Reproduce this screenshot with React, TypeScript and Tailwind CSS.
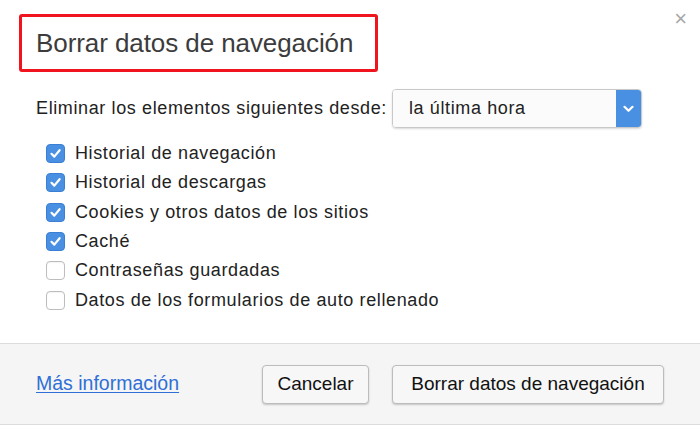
import React from "react";

const items: { label: string; checked: boolean }[] = [
  { label: "Historial de navegación", checked: true },
  { label: "Historial de descargas", checked: true },
  { label: "Cookies y otros datos de los sitios", checked: true },
  { label: "Caché", checked: true },
  { label: "Contraseñas guardadas", checked: false },
  { label: "Datos de los formularios de auto rellenado", checked: false },
];

function Box({ checked }: { checked: boolean }) {
  if (checked) {
    return (
      <span className="flex h-[19px] w-[19px] shrink-0 items-center justify-center rounded-[4px] border border-[#3a7fd3] bg-[#4a90e2]">
        <svg width="13" height="13" viewBox="0 0 13 13">
          <path d="M2.5 6.8 L5.3 9.6 L10.6 3.2" fill="none" stroke="white" strokeWidth="2.2" strokeLinecap="round" strokeLinejoin="round" />
        </svg>
      </span>
    );
  }
  return <span className="block h-[19px] w-[19px] shrink-0 rounded-[4px] border border-[#bdbdbd] bg-white shadow-[inset_0_1px_1px_rgba(0,0,0,0.05)]" />;
}

export default function App() {
  return (
    <div className="flex h-[432px] w-[700px] flex-col bg-white text-[#333]" style={{ fontFamily: '"Liberation Sans", Arial, sans-serif' }}>
      <div className="flex flex-1 flex-col">
        <div className="flex items-start justify-between">
          <div className="ml-[19px] mt-[14px] flex h-[58px] w-[359px] items-center rounded-[3px] border-[3px] border-[#f0141e] pl-[14px]">
            <span className="text-[26px] leading-none tracking-[-0.08px] text-[#3c3c3c]">Borrar datos de navegación</span>
          </div>
          <span className="mr-[13px] mt-[8px] text-[22px] leading-none text-[#a8a8a8]">×</span>
        </div>
        <div className="ml-[36px] mt-[17px] flex items-center gap-[5px]">
          <span className="text-[18px] tracking-[0.62px] text-[#222]">Eliminar los elementos siguientes desde:</span>
          <div className="flex h-[39px] w-[250px] overflow-hidden rounded-[4px] border border-[#c8c8c8] shadow-[0_1px_2px_rgba(0,0,0,0.15)]">
            <div className="flex flex-1 items-center bg-[#fbfbfb] pl-[16px] text-[18px] tracking-[0.62px] text-[#222]">la última hora</div>
            <div className="flex w-[25px] items-center justify-center bg-[#4a90e2]">
              <svg width="11" height="8" viewBox="0 0 11 8">
                <path d="M1.5 1.8 L5.5 5.8 L9.5 1.8" fill="none" stroke="white" strokeWidth="2.2" strokeLinecap="round" strokeLinejoin="round" />
              </svg>
            </div>
          </div>
        </div>
        <div className="ml-[46px] mt-[11px] flex flex-col">
          {items.map((it) => (
            <div key={it.label} className="flex h-[29.3px] items-center gap-[10px]">
              <Box checked={it.checked} />
              <span className="text-[18px] tracking-[0.62px] text-[#222]">{it.label}</span>
            </div>
          ))}
        </div>
      </div>
      <div className="flex h-[82px] items-center border-y border-[#dcdcdc] bg-[#f5f5f5] pl-[36px] pr-[36px]">
        <a className="text-[19.5px] text-[#2f6fd6] underline underline-offset-2">Más información</a>
        <div className="ml-auto flex gap-[23px]">
          <button className="h-[39px] w-[107px] rounded-[4px] border border-[#bcbcbc] bg-[#f7f7f7] text-[19px] text-[#111] shadow-[0_1px_2px_rgba(0,0,0,0.2)]">Cancelar</button>
          <button className="h-[39px] w-[272px] rounded-[4px] border border-[#bcbcbc] bg-[#f7f7f7] text-[19px] text-[#111] shadow-[0_1px_2px_rgba(0,0,0,0.2)]">Borrar datos de navegación</button>
        </div>
      </div>
      <div className="h-[7px] bg-white" />
    </div>
  );
}
